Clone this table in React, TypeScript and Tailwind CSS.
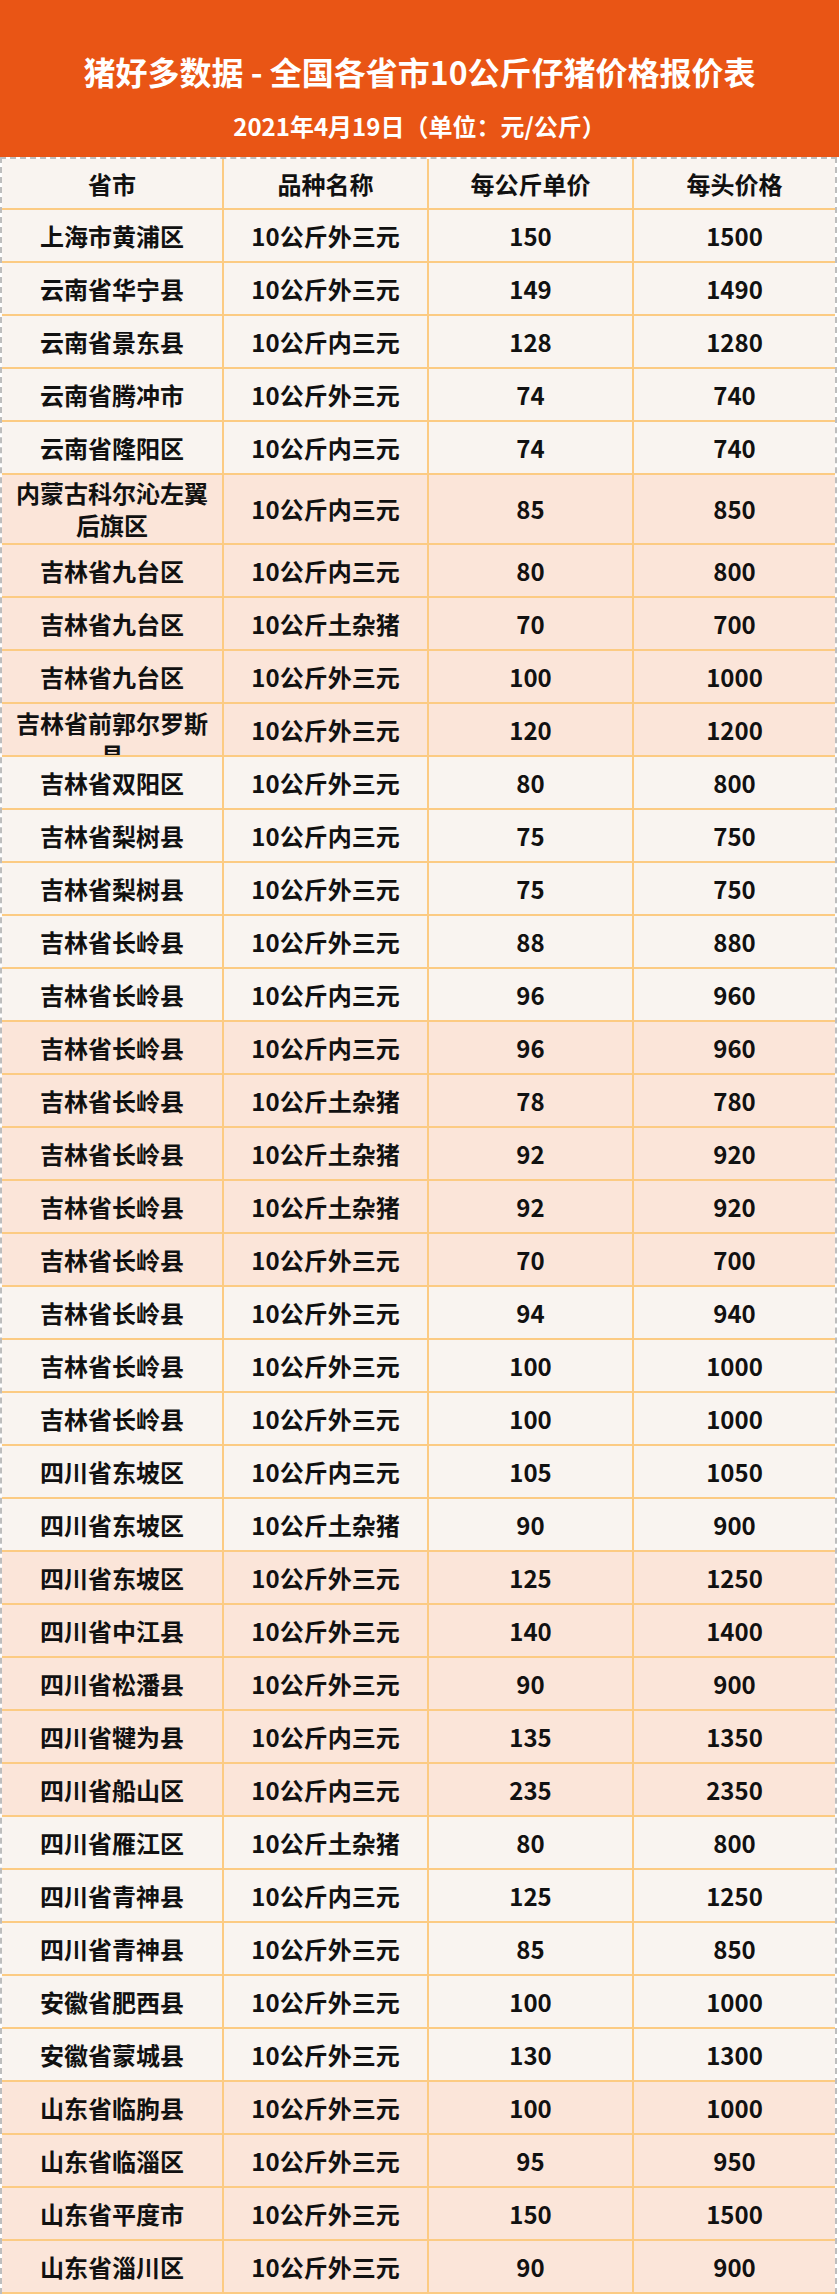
const rows: Array<[string, string, string, string]> = [
  ['上海市黄浦区', '10公斤外三元', '150', '1500'],
  ['云南省华宁县', '10公斤外三元', '149', '1490'],
  ['云南省景东县', '10公斤内三元', '128', '1280'],
  ['云南省腾冲市', '10公斤外三元', '74', '740'],
  ['云南省隆阳区', '10公斤内三元', '74', '740'],
  ['内蒙古科尔沁左翼后旗区', '10公斤内三元', '85', '850'],
  ['吉林省九台区', '10公斤内三元', '80', '800'],
  ['吉林省九台区', '10公斤土杂猪', '70', '700'],
  ['吉林省九台区', '10公斤外三元', '100', '1000'],
  ['吉林省前郭尔罗斯县', '10公斤外三元', '120', '1200'],
  ['吉林省双阳区', '10公斤外三元', '80', '800'],
  ['吉林省梨树县', '10公斤内三元', '75', '750'],
  ['吉林省梨树县', '10公斤外三元', '75', '750'],
  ['吉林省长岭县', '10公斤外三元', '88', '880'],
  ['吉林省长岭县', '10公斤内三元', '96', '960'],
  ['吉林省长岭县', '10公斤内三元', '96', '960'],
  ['吉林省长岭县', '10公斤土杂猪', '78', '780'],
  ['吉林省长岭县', '10公斤土杂猪', '92', '920'],
  ['吉林省长岭县', '10公斤土杂猪', '92', '920'],
  ['吉林省长岭县', '10公斤外三元', '70', '700'],
  ['吉林省长岭县', '10公斤外三元', '94', '940'],
  ['吉林省长岭县', '10公斤外三元', '100', '1000'],
  ['吉林省长岭县', '10公斤外三元', '100', '1000'],
  ['四川省东坡区', '10公斤内三元', '105', '1050'],
  ['四川省东坡区', '10公斤土杂猪', '90', '900'],
  ['四川省东坡区', '10公斤外三元', '125', '1250'],
  ['四川省中江县', '10公斤外三元', '140', '1400'],
  ['四川省松潘县', '10公斤外三元', '90', '900'],
  ['四川省犍为县', '10公斤内三元', '135', '1350'],
  ['四川省船山区', '10公斤内三元', '235', '2350'],
  ['四川省雁江区', '10公斤土杂猪', '80', '800'],
  ['四川省青神县', '10公斤内三元', '125', '1250'],
  ['四川省青神县', '10公斤外三元', '85', '850'],
  ['安徽省肥西县', '10公斤外三元', '100', '1000'],
  ['安徽省蒙城县', '10公斤外三元', '130', '1300'],
  ['山东省临朐县', '10公斤外三元', '100', '1000'],
  ['山东省临淄区', '10公斤外三元', '95', '950'],
  ['山东省平度市', '10公斤外三元', '150', '1500'],
  ['山东省淄川区', '10公斤外三元', '90', '900'],
]

const font = { fontFamily: '"Noto Sans CJK SC", "Noto Sans", sans-serif' }

function Cell({
  children,
  last,
  clip,
}: {
  children: React.ReactNode
  last?: boolean
  clip?: boolean
}) {
  return (
    <div
      className={
        'flex justify-center overflow-hidden px-[4px] text-center leading-[32px] ' +
        (clip ? 'items-start pt-[3px] ' : 'items-center ') +
        (last ? '' : 'border-r-2 border-[#FCCB83]')
      }
    >
      {children}
    </div>
  )
}

export default function App() {
  return (
    <div className="w-[839px] bg-white" style={font}>
      <header className="flex h-[157px] flex-col items-center gap-[20px] bg-[#E95515] pt-[51px] text-white">
        <h1 className="text-[32px] font-bold leading-[40px]">
          猪好多数据 - 全国各省市10公斤仔猪价格报价表
        </h1>
        <p className="text-[24px] font-bold leading-[30px]">
          2021年4月19日（单位：元/公斤）
        </p>
      </header>

      <div className="w-[837px] border-x-2 border-t-2 border-dashed border-[#BDBDBD] text-[24px] font-bold text-[#111]">
        <div className="grid h-[51px] grid-cols-[222px_205px_205px_1fr] border-b-2 border-[#FCCB83] bg-[#F9F4F0]">
          <Cell>省市</Cell>
          <Cell>品种名称</Cell>
          <Cell>每公斤单价</Cell>
          <Cell last>每头价格</Cell>
        </div>
        {rows.map(([place, kind, unit, head], i) => {
          const peach = Math.floor(i / 5) % 2 === 1
          const tall = place.length > 10
          const wraps = place.length > 8 && !tall
          return (
            <div
              key={i}
              className={
                'grid grid-cols-[222px_205px_205px_1fr] border-b-2 border-[#FCCB83] ' +
                (tall ? 'h-[70px] ' : 'h-[53px] ') +
                (peach ? 'bg-[#FBE5D9]' : 'bg-[#F9F4F0]')
              }
            >
              <Cell clip={wraps}>{place}</Cell>
              <Cell>{kind}</Cell>
              <Cell>{unit}</Cell>
              <Cell last>{head}</Cell>
            </div>
          )
        })}
      </div>
    </div>
  )
}
